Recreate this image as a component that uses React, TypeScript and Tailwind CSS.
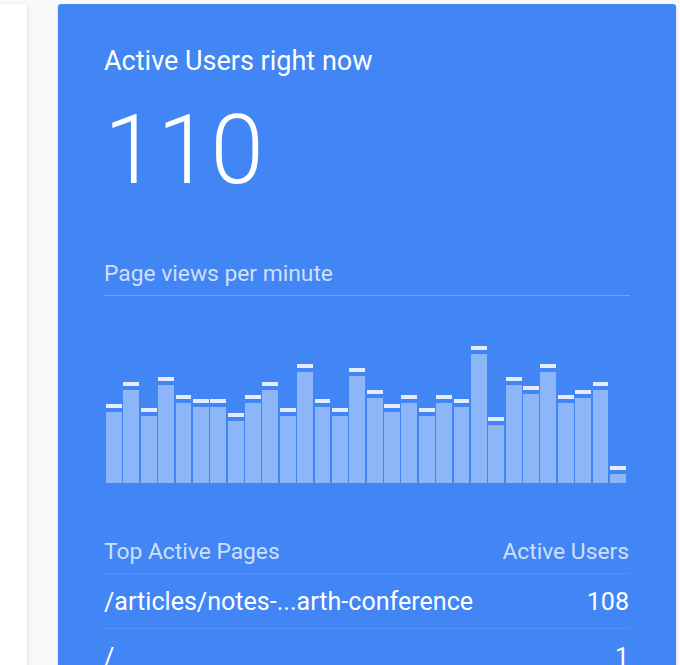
const tops = [412, 390, 416, 385, 403, 407, 407, 421, 403, 390, 416, 372, 407, 416, 376, 398, 412, 403, 416, 403, 407, 354, 425, 385, 394, 372, 403, 398, 390, 474]

const pages = [
  { path: "/articles/notes-...arth-conference", users: 108 },
  { path: "/", users: 1 },
]

function Bars() {
  return (
    <div className="flex items-end gap-[1.4px] h-[140px] ml-[2px] mr-[4px]">
      {tops.map((top, i) => (
        <div key={i} className="flex-1 flex flex-col gap-[4px]">
          <div className="h-[4px] bg-white/85" />
          <div className="bg-white/40" style={{ height: 483 - top }} />
        </div>
      ))}
    </div>
  )
}

export default function App() {
  return (
    <div className="h-[665px] w-[680px] overflow-hidden bg-[#f8f9fb] flex items-start gap-[31px] pt-[4px] font-['Roboto',sans-serif]">
      {/* Left card, mostly cut off */}
      <div className="w-[27px] h-[700px] bg-white rounded-r-[3px] shadow-[0_1px_4px_rgba(0,0,0,0.15)]" />

      {/* Realtime card */}
      <div className="w-[618px] h-[700px] shrink-0 bg-[#4285f4] rounded-[3px] shadow-[0_1px_3px_rgba(0,0,0,0.15)] px-[46px] pt-[38px]">
        <div className="text-[27px] leading-[38px] text-white">Active Users right now</div>
        <div className="text-[96px] leading-[112px] font-light text-white mt-[14px]">110</div>

        <div className="mt-[53px] text-[22.8px] leading-[30px] text-white/75 pb-[6px] border-b border-white/25">
          Page views per minute
        </div>

        <div className="mt-[47px]">
          <Bars />
        </div>

        <div className="mt-[54px] flex justify-between text-[22.8px] leading-[30px] text-white/75 pb-[6px] border-b border-white/10">
          <span>Top Active Pages</span>
          <span className="pr-[1px]">Active Users</span>
        </div>
        {pages.map((p) => (
          <div
            key={p.path}
            className="flex justify-between items-center h-[55px] pt-[2px] text-[25.08px] text-white border-b border-white/10"
          >
            <span>{p.path}</span>
            <span className="pr-[1px]">{p.users}</span>
          </div>
        ))}
      </div>
    </div>
  )
}
